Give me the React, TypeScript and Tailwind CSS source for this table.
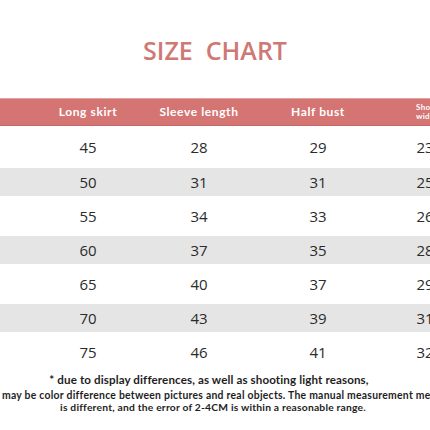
const columns = [
  { key: "size", label: "", width: "w-[30px]" },
  { key: "skirt", label: "Long skirt", width: "w-[116px]" },
  { key: "sleeve", label: "Sleeve length", width: "w-[106px]" },
  { key: "bust", label: "Half bust", width: "w-[132px]" },
  { key: "shoulder", label: "Shoulder width", width: "w-[88px]" },
];

const rows = [
  ["", "45", "28", "29", "23"],
  ["", "50", "31", "31", "25"],
  ["", "55", "34", "33", "26"],
  ["", "60", "37", "35", "28"],
  ["", "65", "40", "37", "29"],
  ["", "70", "43", "39", "31"],
  ["", "75", "46", "41", "32"],
];

const App = () => {
  return (
    <div className="w-[430px] h-[430px] overflow-hidden bg-white">
      <h1 className="pt-[33px] h-[98px] text-center text-[25px] leading-[34px] font-semibold text-[#cf7874] font-['Open_Sans',sans-serif]">
        SIZE&nbsp;&nbsp;CHART
      </h1>

      <div className="flex h-[28px] items-center bg-[#d47573] border-t border-[#e3a3a1] border-b border-b-[#c86866] font-['Lato',sans-serif] font-bold text-white">
        {columns.map((col) => (
          <div
            key={col.key}
            className={`${col.width} shrink-0 ${
              col.key === "shoulder"
                ? "text-[8px] leading-[9.5px] pl-[32px] text-left tracking-[0.04em]"
                : "text-center text-[12px] tracking-[0.05em]"
            }`}
          >
            {col.key === "shoulder" ? (
              <>
                Shoulder
                <br />
                width
              </>
            ) : (
              col.label
            )}
          </div>
        ))}
      </div>

      <div className="font-['Open_Sans',sans-serif] text-[15px] text-[#2b2b2b]">
        {rows.map((row, i) => (
          <div
            key={i}
            className={`flex items-center ${
              i % 2 === 1
                ? "h-[28px] bg-[#e5e5e5]"
                : i === 0
                ? "h-[42px]"
                : "h-[40px]"
            }`}
          >
            {row.map((cell, j) => (
              <div
                key={j}
                className={`${columns[j].width} shrink-0 text-center ${
                  j === 4 ? "pr-[6px]" : ""
                }`}
              >
                {cell}
              </div>
            ))}
          </div>
        ))}
      </div>

      <div className="font-['Lato',sans-serif] font-bold text-[#1e1e1e] text-center">
        <p className="text-[11.6px] leading-[14px] pt-[1px] pr-[12px] tracking-[0.01em]">
          * due to display differences, as well as shooting light reasons,
        </p>
        <p className="mt-[3px] text-[10.4px] leading-[11.5px] whitespace-nowrap pl-[2px] text-left tracking-[0.025em]">
          may be color difference between pictures and real objects. The manual measurement method
        </p>
        <p className="text-[10.3px] leading-[11.5px] pr-[4px] tracking-[0.02em]">
          is different, and the error of 2-4CM is within a reasonable range.
        </p>
      </div>
    </div>
  );
};

export default App;
